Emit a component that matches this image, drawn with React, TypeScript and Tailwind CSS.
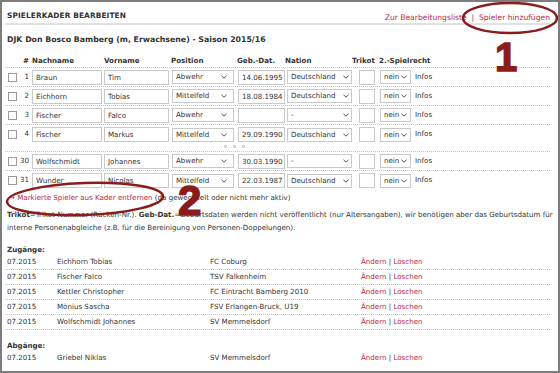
import React from "react";

const RED = "text-[#b8283c]";

function Chevron() {
  return (
    <svg width="6" height="4" viewBox="0 0 6 4" className="shrink-0">
      <path d="M0.5 0.8 L3 3.2 L5.5 0.8" fill="none" stroke="#555" strokeWidth="1" />
    </svg>
  );
}

function Box({ w, v }: { w: string; v: string }) {
  return (
    <div className={`h-[15px] shrink-0 border border-[#c9c9c9] bg-white pl-[3px] leading-[13px] whitespace-nowrap overflow-hidden ${w}`}>
      {v}
    </div>
  );
}

function Sel({ w, v, pr }: { w: string; v: string; pr: string }) {
  return (
    <div className={`h-[14px] shrink-0 border border-[#c9c9c9] bg-white pl-[3px] flex items-center justify-between ${w} ${pr}`}>
      <span className="leading-[12px] whitespace-nowrap">{v}</span>
      <Chevron />
    </div>
  );
}

type P = { n: number; last: string; first: string; pos: string; dob: string; nat: string; line: boolean };

function PlayerRow({ p }: { p: P }) {
  return (
    <div className={`flex h-[19px] items-center pl-[3px] ${p.line ? "border-b border-dotted border-[#c4c4c4]" : ""}`}>
      <div className="h-[9px] w-[9px] shrink-0 border border-[#9a9a9a] bg-white" />
      <div className="w-[13px] shrink-0 text-right pr-[1px]">{p.n}</div>
      <div className="ml-[2px]"><Box w="w-[70px]" v={p.last} /></div>
      <div className="ml-[2px]"><Box w="w-[65px]" v={p.first} /></div>
      <div className="ml-[3px]"><Sel w="w-[62px]" v={p.pos} pr="pr-[6px]" /></div>
      <div className="ml-[4px]"><Box w="w-[47px]" v={p.dob} /></div>
      <div className="ml-[2px]"><Sel w="w-[65px]" v={p.nat} pr="pr-[2px]" /></div>
      <div className="ml-[7px]"><Box w="w-[16px]" v="" /></div>
      <div className="ml-[5px]"><Sel w="w-[31px]" v="nein" pr="pr-[3px]" /></div>
      <div className="ml-[4px]">Infos</div>
    </div>
  );
}

function ListRow({ d, name, club, line }: { d: string; name: string; club: string; line: boolean }) {
  return (
    <div className={`flex h-[15px] items-center pl-[2px] ${line ? "border-b border-dotted border-[#c4c4c4]" : ""}`}>
      <div className="w-[50px] shrink-0">{d}</div>
      <div className="w-[153px] shrink-0">{name}</div>
      <div className="w-[151px] shrink-0">{club}</div>
      <div className="whitespace-nowrap">
        <span className={RED}>Ändern</span> | <span className={RED}>Löschen</span>
      </div>
    </div>
  );
}

export default function App() {
  const top: P[] = [
    { n: 1, last: "Braun", first: "Tim", pos: "Abwehr", dob: "14.06.1995", nat: "Deutschland", line: true },
    { n: 2, last: "Eichhorn", first: "Tobias", pos: "Mittelfeld", dob: "18.08.1984", nat: "Deutschland", line: true },
    { n: 3, last: "Fischer", first: "Falco", pos: "Abwehr", dob: "", nat: "-", line: true },
    { n: 4, last: "Fischer", first: "Markus", pos: "Mittelfeld", dob: "29.09.1990", nat: "Deutschland", line: false },
  ];
  const bottom: P[] = [
    { n: 30, last: "Wolfschmidt", first: "Johannes", pos: "Abwehr", dob: "30.03.1990", nat: "-", line: true },
    { n: 31, last: "Wunder", first: "Nicolas", pos: "Mittelfeld", dob: "22.03.1987", nat: "Deutschland", line: false },
  ];
  const zug = [
    ["07.2015", "Eichhorn Tobias", "FC Coburg"],
    ["07.2015", "Fischer Falco", "TSV Falkenheim"],
    ["07.2015", "Kettler Christopher", "FC Eintracht Bamberg 2010"],
    ["07.2015", "Mönius Sascha", "FSV Erlangen-Bruck, U19"],
    ["07.2015", "Wolfschmidt Johannes", "SV Memmelsdorf"],
  ];
  return (
    <div className="relative h-[373px] w-[560px] overflow-hidden border-2 border-[#7d7d7d] bg-white font-['DejaVu_Sans',Verdana,sans-serif] text-[7.1px] text-[#333]">
      <div className="ml-[3px] mr-[8px]">
        <div className="flex h-[21px] items-start justify-between">
          <div className="mt-[9px] pl-[2px] text-[7.4px] font-bold leading-[10px] tracking-[0.1px]">SPIELERKADER BEARBEITEN</div>
          <div className="mt-[11px] text-[7.6px] leading-[10px]">
            <span className={RED}>Zur Bearbeitungsliste</span>
            <span className="text-[#555]">&nbsp; | &nbsp;</span>
            <span className={RED}>Spieler hinzufügen</span>
          </div>
        </div>
        <div className="h-[2px] bg-[#e2e2e2]" />
        <div className="mt-[9px] pl-[2px] text-[7.8px] font-bold leading-[12px]">
          DJK Don Bosco Bamberg (m, Erwachsene) - Saison 2015/16
        </div>

        <div className="mt-[9px] flex h-[13px] items-center border-b border-dotted border-[#c4c4c4] pl-[3px] font-bold">
          <div className="w-[9px] shrink-0" />
          <div className="w-[13px] shrink-0 pr-[1px] text-right">#</div>
          <div className="ml-[2px] w-[72px] shrink-0">Nachname</div>
          <div className="w-[67px] shrink-0">Vorname</div>
          <div className="w-[66px] shrink-0">Position</div>
          <div className="w-[48px] shrink-0">Geb.-Dat.</div>
          <div className="w-[67px] shrink-0">Nation</div>
          <div className="w-[27px] shrink-0">Trikot</div>
          <div>2.-Spielrecht</div>
        </div>
        {top.map((p) => (
          <PlayerRow key={p.n} p={p} />
        ))}
        <div className="flex h-[8px] items-start gap-[6px] border-b border-dotted border-[#c4c4c4] pl-[219px] pt-[1px]">
          <div className="h-[3px] w-[3px] bg-[#d6d6d6]" />
          <div className="h-[3px] w-[3px] bg-[#d6d6d6]" />
          <div className="h-[3px] w-[3px] bg-[#d6d6d6]" />
        </div>
        {bottom.map((p) => (
          <PlayerRow key={p.n} p={p} />
        ))}

        <div className="mt-[3px] pl-[4px] leading-[10px]">
          <span className={RED}>→ Markierte Spieler aus Kader entfernen</span> (da gewechselt oder nicht mehr aktiv)
        </div>
        <div className="mt-[5px] pl-[2px] leading-[13px] whitespace-nowrap">
          <b>Trikot</b>=Trikot-Nummer (Rücken-Nr.). <b>Geb-Dat.</b>=Geburtsdaten werden nicht veröffentlicht (nur Altersangaben), wir benötigen aber das Geburtsdatum für
          <br />
          interne Personenabgleiche (z.B. für die Bereinigung von Personen-Doppelungen).
        </div>

        <div className="mt-[11px] pl-[2px] font-bold leading-[10px]">Zugänge:</div>
        {zug.map((z, i) => (
          <ListRow key={i} d={z[0]} name={z[1]} club={z[2]} line={true} />
        ))}
        <div className="mt-[11px] pl-[2px] font-bold leading-[10px]">Abgänge:</div>
        <ListRow d="07.2015" name="Griebel Niklas" club="SV Memmelsdorf" line={false} />
      </div>

      <svg className="pointer-events-none absolute left-[-2px] top-[-2px]" width="560" height="373" viewBox="0 0 560 373">
        <ellipse cx="510" cy="18" rx="47" ry="15" fill="none" stroke="#8b1c1c" strokeWidth="2.5" />
        <ellipse cx="85" cy="199" rx="78" ry="16" fill="none" stroke="#8b1c1c" strokeWidth="2.5" transform="rotate(-2 85 199)" />
      </svg>
      <div className="pointer-events-none absolute left-[493px] top-[35px] font-['Liberation_Sans',Arial,sans-serif] text-[40px] font-bold leading-none text-[#8b1c1c] [-webkit-text-stroke:1.5px_#8b1c1c]">
        1
      </div>
      <div className="pointer-events-none absolute left-[176px] top-[178px] font-['Liberation_Sans',Arial,sans-serif] text-[42px] font-bold leading-none text-[#8b1c1c] [-webkit-text-stroke:1.5px_#8b1c1c]">
        2
      </div>
    </div>
  );
}
